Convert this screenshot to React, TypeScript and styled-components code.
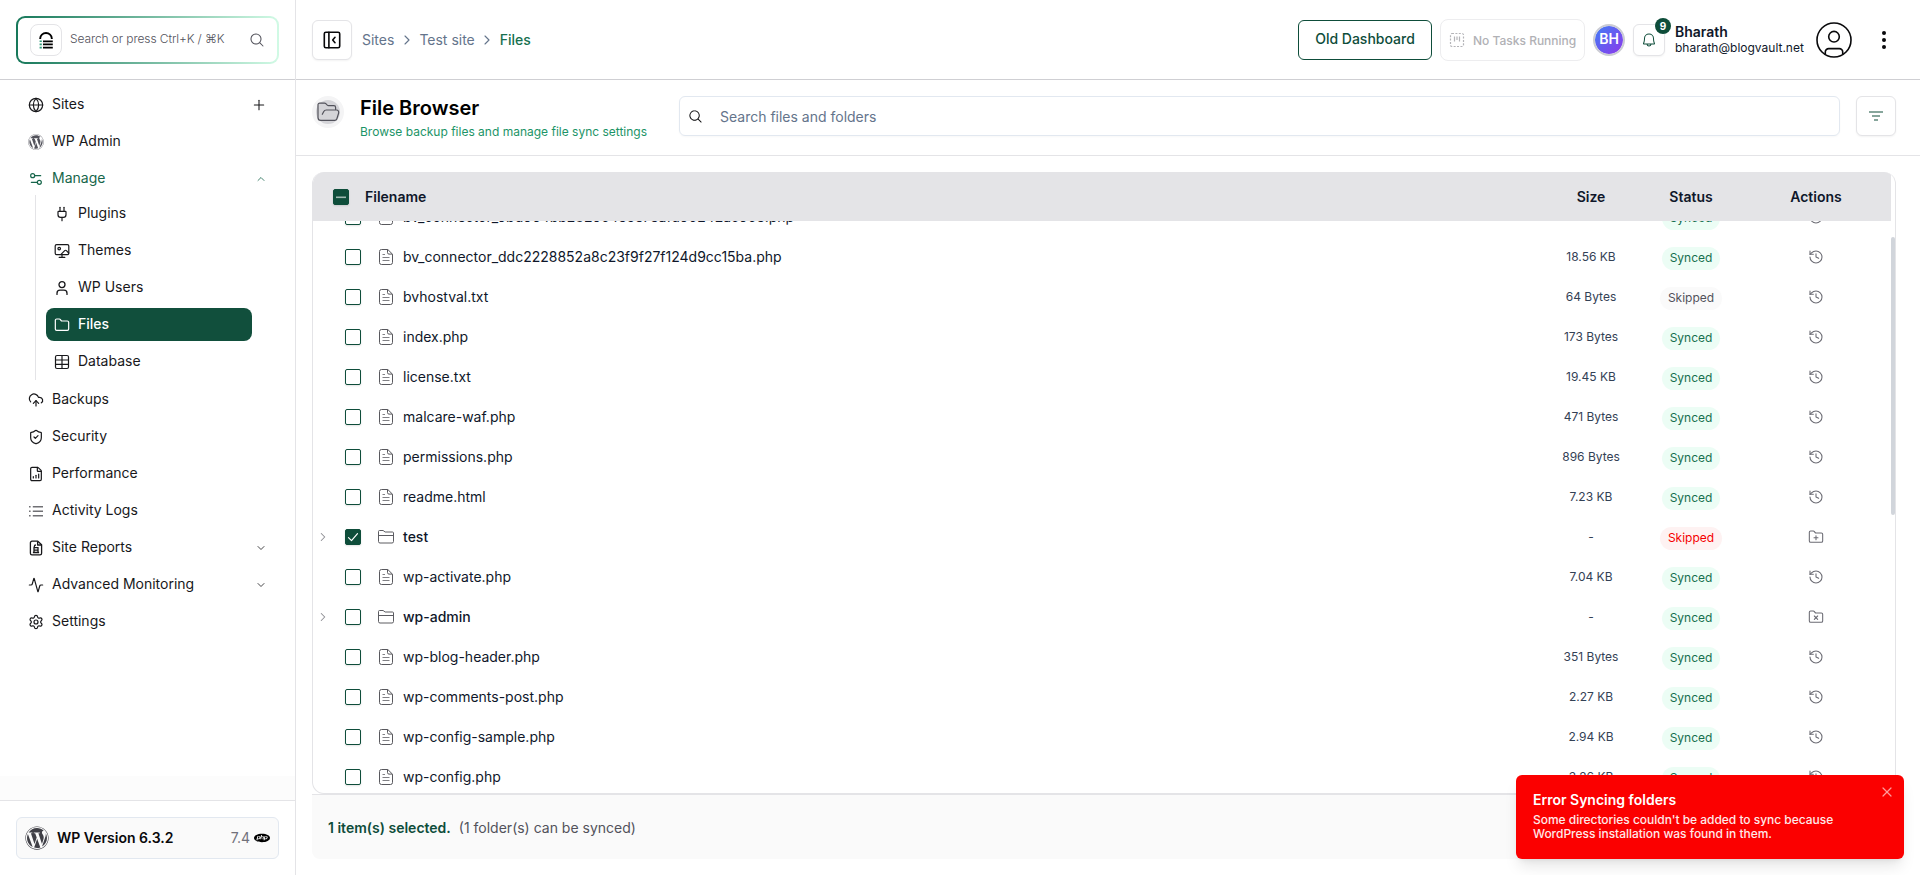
import React from "react";
import styled, { createGlobalStyle, css } from "styled-components";
import {
  Activity,
  ChevronDown,
  ChevronRight,
  ChevronUp,
  CloudUpload,
  FileChartColumnIncreasing,
  Folder,
  FolderPlus,
  FolderX,
  Globe,
  History,
  Plug,
  Plus,
  Settings,
  Settings2,
  ShieldCheck,
  Table as TableIcon,
  UserRound,
  X,
} from "lucide-react";
import { FaWordpress } from "react-icons/fa";
import { SiPhp } from "react-icons/si";
import { PiBell, PiMagnifyingGlass } from "react-icons/pi";

const GlobalStyle = createGlobalStyle`
  *, *::before, *::after { box-sizing: border-box; }
  body {
    margin: 0;
    background: #fff;
    color: #0f172a;
    font-family: Inter, "Liberation Sans", sans-serif;
    font-size: 14px;
    line-height: 20px;
    overflow: hidden;
  }
  svg { display: block; flex: none; }
  button { font: inherit; background: none; border: 0; padding: 0; margin: 0; }
`;

const green = "#0e4d3a";
const line = "#e4e4e7";

/* ---------- shell ---------- */

const Shell = styled.div`
  display: flex;
  width: 100vw;
  height: 875px;
`;

const Sidebar = styled.aside`
  display: flex;
  flex-direction: column;
  width: 296px;
  flex: none;
  border-right: 1px solid ${line};
`;

const Main = styled.main`
  display: flex;
  flex-direction: column;
  flex: 1;
  min-width: 0;
`;

/* ---------- sidebar ---------- */

const SidebarTop = styled.div`
  height: 80px;
  padding: 16px 16px 15px;
  border-bottom: 1px solid #cfcfd3;
`;

const QuickSearch = styled.div`
  display: flex;
  align-items: center;
  width: 263px;
  height: 48px;
  padding: 0 12px 0 12px;
  border: 2px solid transparent;
  border-radius: 9px;
  background: linear-gradient(#fff, #fff) padding-box,
    linear-gradient(90deg, #17785a, #d1fae5) border-box;
`;

const LogoTile = styled.div`
  display: flex;
  align-items: center;
  justify-content: center;
  width: 32px;
  height: 32px;
  border: 1px solid ${line};
  border-radius: 8px;
`;

const QuickSearchText = styled.span`
  flex: 1;
  margin: -2px 0 0 8px;
  font-size: 12px;
  font-weight: 300;
  letter-spacing: -0.1px;
  color: #52525b;
  white-space: nowrap;
`;

const Nav = styled.nav`
  display: flex;
  flex-direction: column;
  flex: 1;
  padding: 6px 28px 0 28px;
`;

const NavItem = styled.a<{ $open?: boolean }>`
  display: flex;
  align-items: center;
  height: 37px;
  gap: 8px;
  color: ${(p) => (p.$open ? "#17664b" : "#18181b")};

  span {
    flex: 1;
    margin-top: -1px;
  }
`;

const SubNav = styled.div`
  display: flex;
  flex-direction: column;
  gap: 4px;
  margin: -2px 0 1px 7px;
  padding: 2px 0 2px 10px;
  border-left: 1px solid ${line};
`;

const SubItem = styled.a<{ $active?: boolean }>`
  display: flex;
  align-items: center;
  gap: 8px;
  width: 206px;
  height: 33px;
  padding-left: 8px;
  border-radius: 8px;
  color: #18181b;
  ${(p) =>
    p.$active &&
    css`
      background: #114f3c;
      color: #fff;
      font-weight: 500;
    `}

  span {
    margin-top: -1px;
  }
`;

const NavFade = styled.div`
  height: 24px;
  background: #fcfcfc;
`;

const SidebarBottom = styled.div`
  height: 75px;
  padding: 16px;
  border-top: 1px solid ${line};
`;

const VersionCard = styled.div`
  display: flex;
  align-items: center;
  width: 263px;
  height: 42px;
  padding: 0 8px 0 8px;
  border: 1px solid #e2e8f0;
  border-radius: 6px;
  background: #fafafa;
`;

const VersionName = styled.strong`
  flex: 1;
  margin-left: 8px;
  font-weight: 600;
  color: #09090b;
`;

const PhpVersion = styled.span`
  display: flex;
  align-items: center;
  gap: 4px;
  color: #71717a;

  svg {
    color: #000;
  }
`;

/* ---------- top bar ---------- */

const TopBar = styled.header`
  display: flex;
  align-items: center;
  height: 80px;
  padding: 0 24px 0 16px;
  border-bottom: 1px solid #cfcfd3;
`;

const IconButton = styled.button<{ $size: number; $radius?: number }>`
  position: relative;
  display: flex;
  align-items: center;
  justify-content: center;
  flex: none;
  width: ${(p) => p.$size}px;
  height: ${(p) => p.$size}px;
  border: 1px solid ${line};
  border-radius: ${(p) => p.$radius ?? 6}px;
  background: #fff;
  box-shadow: 0 1px 2px rgba(0, 0, 0, 0.05);
  color: #09090b;
`;

const Crumbs = styled.div`
  display: flex;
  align-items: center;
  flex: 1;
  gap: 4.5px;
  margin-left: 10px;
  color: #64748b;
`;

const Crumb = styled.span<{ $current?: boolean }>`
  ${(p) => p.$current && "color: #17704f;"}
  font-weight: ${(p) => (p.$current ? 500 : 400)};
`;

const OutlineButton = styled.button`
  width: 134px;
  height: 40px;
  padding-bottom: 2px;
  border: 1px solid ${green};
  border-radius: 6px;
  color: ${green};
  font-weight: 500;
`;

const TaskStatus = styled.div`
  display: flex;
  align-items: center;
  gap: 8px;
  width: 145px;
  height: 42px;
  margin-left: 8px;
  padding-left: 8px;
  border: 1px solid #ededef;
  border-radius: 8px;
  color: #b1b1b5;
  font-size: 12px;
  font-weight: 500;

  span {
    padding-top: 3px;
    white-space: nowrap;
  }
`;

const Avatar = styled.div`
  display: flex;
  align-items: center;
  justify-content: center;
  width: 32px;
  height: 32px;
  margin: 0 8px;
  padding-bottom: 2px;
  border: 2px solid #cbccd4;
  border-radius: 50%;
  background: linear-gradient(135deg, #3b82f6, #9333ea) border-box;
  background-clip: padding-box;
  color: #fff;
  font-weight: 600;
`;

const CountBadge = styled.span`
  position: absolute;
  top: -7px;
  right: -7px;
  width: 16px;
  height: 16px;
  border-radius: 50%;
  background: ${green};
  color: #fff;
  font-size: 10px;
  font-weight: 700;
  line-height: 16px;
  text-align: center;
`;

const Account = styled.div`
  display: flex;
  flex-direction: column;
  width: 141px;
  margin-left: 10px;
  line-height: 16px;
  white-space: nowrap;
  font-size: 12px;

  strong {
    font-size: 14px;
    font-weight: 600;
  }
`;

const Kebab = styled.button`
  margin: 0 10px 0 30px;
`;

/* ---------- page header ---------- */

const PageHeader = styled.section`
  display: flex;
  align-items: flex-start;
  height: 76px;
  padding: 16px 24px 0 16px;
  border-bottom: 1px solid ${line};
`;

const FolderBadge = styled.div`
  display: flex;
  align-items: center;
  justify-content: center;
  width: 32px;
  height: 32px;
  border: 4px solid #f4f4f5;
  border-radius: 50%;
  background: #d4d4d8;
`;

const TitleBlock = styled.div`
  width: 335px;
  padding-left: 16px;
`;

const Title = styled.h1`
  margin: -2px 0 0;
  color: #000;
  font-size: 20px;
  font-weight: 600;
  line-height: 28px;
`;

const Subtitle = styled.p`
  margin: 2px 0 0;
  color: #1c9467;
  font-size: 12px;
  line-height: 16px;
  white-space: nowrap;
`;

const SearchField = styled.div`
  display: flex;
  align-items: center;
  flex: 1;
  gap: 17px;
  height: 40px;
  margin-right: 16px;
  padding-left: 8px;
  border: 1px solid #e2e8f0;
  border-radius: 6px;
  box-shadow: 0 1px 2px rgba(0, 0, 0, 0.03);
  color: #64748b;

  span {
    padding-top: 2px;
  }
`;

/* ---------- file table ---------- */

const columns = "1fr 100px 100px 150px";

const TableCard = styled.section`
  height: 622px;
  margin: 16px 24px 0 16px;
  display: flex;
  border: 1px solid ${line};
  border-top: 0;
  border-radius: 12px;
  overflow: hidden;
`;

const TableBody = styled.div`
  flex: 1;
  display: flex;
  flex-direction: column;
`;

const HeadRow = styled.div`
  display: grid;
  grid-template-columns: ${columns};
  align-items: center;
  flex: none;
  height: 49px;
  background: #e4e4e7;
  font-weight: 600;
`;

const HeadName = styled.div`
  display: flex;
  align-items: center;
  gap: 16px;
  padding-left: 20px;
`;

const HeadCell = styled.div`
  text-align: center;
`;

const Rows = styled.div`
  flex: 1;
  overflow: hidden;
`;

const RowList = styled.div`
  margin-top: -24px;
`;

const Row = styled.div`
  display: grid;
  grid-template-columns: ${columns};
  align-items: center;
  height: 40px;
`;

const NameCell = styled.div<{ $folder?: boolean }>`
  display: flex;
  align-items: center;
  font-weight: ${(p) => (p.$folder ? 500 : 400)};
`;

const Expander = styled.div`
  width: 32px;
  padding-left: 3px;
  color: #8d8d93;
`;

const Checkbox = styled.div<{ $filled?: boolean }>`
  display: flex;
  align-items: center;
  justify-content: center;
  flex: none;
  width: 16px;
  height: 16px;
  border: 1px solid ${green};
  border-radius: 2px;
  background: ${(p) => (p.$filled ? green : "#fff")};
  box-shadow: 0 1px 2px rgba(0, 0, 0, 0.12);
`;

const TypeIcon = styled.div`
  width: 16px;
  margin: 0 9px 0 17px;
`;

const SizeCell = styled.div`
  color: #334155;
  font-size: 12px;
  text-align: center;
`;

type Tone = "green" | "gray" | "red";

const tones: Record<Tone, string> = {
  green: "background: #ecfdf5; color: #17704f;",
  gray: "background: #fafafa; color: #52525b;",
  red: "background: #fef2f2; color: #f50000;",
};

const Status = styled.span<{ $tone: Tone }>`
  justify-self: center;
  height: 23px;
  margin-top: 3px;
  padding: 0 8px;
  border-radius: 12px;
  font-size: 12px;
  line-height: 21px;
  ${(p) => tones[p.$tone]}
`;

const ActionCell = styled.div`
  display: flex;
  justify-content: center;
  color: #6b6b73;
`;

const ScrollTrack = styled.div`
  width: 4px;
  padding-top: 65px;
`;

const ScrollThumb = styled.div`
  height: 278px;
  border-radius: 2px;
  background: #d1d5db;
`;

const SelectionBar = styled.footer`
  display: flex;
  align-items: center;
  gap: 8px;
  height: 65px;
  margin: 0 24px 0 16px;
  padding: 2px 16px 0;
  border-top: 1px solid ${line};
  border-radius: 0 0 8px 8px;
  background: #fafafa;
  color: #52525b;

  strong {
    color: ${green};
    font-weight: 600;
  }
`;

/* ---------- toast ---------- */

const Toast = styled.div`
  position: absolute;
  right: 16px;
  top: 775px;
  width: 388px;
  height: 84px;
  padding: 15px 17px;
  border-radius: 6px;
  background: #fb0000;
  box-shadow: 0 10px 15px -3px rgba(0, 0, 0, 0.1), 0 4px 6px -4px rgba(0, 0, 0, 0.1);
  color: #fff;

  h2 {
    margin: 0;
    font-size: 14px;
    font-weight: 600;
    line-height: 20px;
  }

  p {
    width: 310px;
    margin: 3px 0 0;
    color: #ffe9e9;
    font-size: 12px;
    font-weight: 500;
    letter-spacing: -0.03px;
    line-height: 14px;
  }
`;

const ToastClose = styled.button`
  position: absolute;
  top: 9px;
  right: 9px;
  color: #ff9c9c;
`;

/* ---------- drawings ---------- */

const BrandMark = () => (
  <svg width="14" height="17" viewBox="0 0 14 17" fill="none">
    <path d="M1.2 7V6.4a5.8 5.4 0 0 1 11.6 0V7" stroke="#000" strokeWidth="1.9" />
    <path d="M4 9.3h9.8M4 12.4h9.8M4 15.6h9.8" stroke="#000" strokeWidth="1.8" />
    <path d="M.6 9.3h2.2M.6 12.4h2.2M.6 15.6h2.2" stroke="#2f9c7a" strokeWidth="1.6" />
  </svg>
);

const PanelIcon = () => (
  <svg width="18" height="18" viewBox="0 0 18 18" fill="none" stroke="#09090b" strokeWidth="1.6" strokeLinecap="round" strokeLinejoin="round">
    <rect x="1.3" y="1.2" width="15.4" height="15.6" rx="1.6" />
    <path d="M5.9 1.2v15.6M12 6.3 9.7 9l2.3 2.7" />
  </svg>
);

const ThemesIcon = () => (
  <svg width="16" height="16" viewBox="0 0 16 16" fill="none" stroke="currentColor" strokeWidth="1.2" strokeLinecap="round" strokeLinejoin="round">
    <rect x="1.2" y="1.6" width="13.6" height="10" rx="1.4" />
    <circle cx="5.2" cy="5.6" r="1.3" />
    <path d="m7 11.4 3.7-3.8a1.2 1.2 0 0 1 1.7 0l2.3 2.4M8 11.6v2.8M5.2 14.4h5.6" />
  </svg>
);

const PersonIcon = () => (
  <svg width="16" height="16" viewBox="0 0 16 16" fill="none" stroke="currentColor" strokeWidth="1.3" strokeLinecap="round" strokeLinejoin="round">
    <circle cx="8" cy="4.6" r="3" />
    <path d="M3 14.4v-1.200a3 3 0 0 1 3-3h4a3 3 0 0 1 3 3v1.200" />
  </svg>
);

const GridIcon = () => (
  <svg width="16" height="16" viewBox="0 0 16 16" fill="none" stroke="currentColor" strokeWidth="1.2">
    <rect x="1.500" y="1.500" width="13" height="13" rx="1.500" />
    <path d="M8 1.500v13M1.500 6h13M1.500 10.300h13" />
  </svg>
);

const ListIcon = () => (
  <svg width="16" height="16" viewBox="0 0 16 16" fill="none" stroke="#707074" strokeWidth="1.4">
    <path d="M4.8 3.7H15M4.8 8.2H15M4.8 12.7H15M1 3.7h1.6M1 8.2h1.6M1 12.7h1.6" />
  </svg>
);

const ReportIcon = () => (
  <svg width="16" height="16" viewBox="0 0 16 16" fill="none" stroke="currentColor" strokeWidth="1.3" strokeLinejoin="round">
    <path d="M9.8 1.2H4A1.6 1.6 0 0 0 2.4 2.8v10.4A1.6 1.6 0 0 0 4 14.8h8a1.6 1.6 0 0 0 1.6-1.6V4.8z" />
    <path d="M9.6 1.4v3.6h3.8" />
    <path d="M6.3 7.6V6.4c0-.8.6-1.4 1.6-1.4M5.4 7.7h5.2M6 7.7v4.8h4V7.7M6 10.1h4M4.9 12.5h6.2" />
  </svg>
);

const TasksIcon = () => (
  <svg width="16" height="16" viewBox="0 0 16 16" fill="none" stroke="#b4b4b8">
    <rect x="1.5" y="1.5" width="13" height="13" rx="1.5" strokeWidth="1.2" strokeDasharray="2 1.4" />
    <path d="M5.5 4.5v5M8 4.5v3.6M10.5 4.5v5" strokeWidth="1.2" />
  </svg>
);

const UserIcon = () => (
  <svg width="36" height="36" viewBox="0 0 36 36" fill="none" stroke="#09090b" strokeWidth="1.6">
    <circle cx="18" cy="18" r="17" />
    <circle cx="18" cy="14.7" r="5.3" />
    <path d="M9.3 32.5V30a3.4 3.4 0 0 1 3.4-3.4h10.6a3.4 3.4 0 0 1 3.4 3.4v2.5" />
  </svg>
);

const KebabIcon = () => (
  <svg width="4" height="18" viewBox="0 0 4 18" fill="#09090b">
    <circle cx="2" cy="2" r="2" />
    <circle cx="2" cy="9" r="2" />
    <circle cx="2" cy="16" r="2" />
  </svg>
);

const OpenFolderIcon = () => (
  <svg width="23" height="20" viewBox="0 0 23 20" fill="none" stroke="#52525b" strokeWidth="1.2" strokeLinecap="round" strokeLinejoin="round">
    <path d="M18.6 7V5.4c0-1-.7-1.7-1.7-1.7h-5.4c-.5 0-.9-.2-1.2-.5L8.8 1.6c-.3-.3-.7-.5-1.2-.5H2.7C1.7 1.1 1 1.8 1 2.8v12.700c0 1.600 1 2.900 2.700 2.900h14.100c1 0 1.700-.5 2-1.400l1.800-5.700c.5-1.600-.5-3.300-2-3.300H9.300c-1.200 0-2 .4-2.500 1.400L5.300 12.300" />
  </svg>
);

const FilterIcon = () => (
  <svg width="14" height="10" viewBox="0 0 14 10" fill="#87a69c">
    <rect width="14" height="2" />
    <rect x="3" y="4" width="8" height="2" />
    <rect x="5" y="8" width="4" height="2" />
  </svg>
);

const DocIcon = () => (
  <svg width="16" height="16" viewBox="0 0 16 16" fill="none" stroke="#58585d" strokeLinejoin="round">
    <path d="M9.8.5H3.5a2 2 0 0 0-2 2v11a2 2 0 0 0 2 2h9a2 2 0 0 0 2-2V5.2z" />
    <path d="M9.5.6v3A1.5 1.5 0 0 0 11 5.1h3.3" />
    <path d="M4.500 5.500h2.500M4.500 8.500h7M4.500 11.500h7" stroke="#808085" />
  </svg>
);

const DirIcon = () => (
  <svg width="16" height="16" viewBox="0 0 16 16" fill="none" stroke="#5c5c61" strokeLinejoin="round">
    <path d="M.5 12.5v-10a1 1 0 0 1 1-1h3.600l2 1.500h7.400a1 1 0 0 1 1 1v8.500a1.500 1.500 0 0 1-1.500 1.500H2a1.500 1.500 0 0 1-1.500-1.500zM.5 6.500h15" />
  </svg>
);

const TickIcon = () => (
  <svg width="12" height="12" viewBox="0 0 12 12" fill="none" stroke="#fff" strokeWidth="1.2" strokeLinecap="round" strokeLinejoin="round">
    <path d="m1.500 6.600 3 3 6-7" />
  </svg>
);

const DashIcon = () => (
  <svg width="10" height="10" viewBox="0 0 10 10">
    <rect y="4.500" width="10" height="1.600" fill="#9fb8b0" />
  </svg>
);

/* ---------- data ---------- */

type FileRow = {
  name: string;
  size: string;
  status: string;
  tone: Tone;
  folder?: boolean;
  checked?: boolean;
};

const file = (name: string, size: string): FileRow => ({ name, size, status: "Synced", tone: "green" });

const files: FileRow[] = [
  file("bv_connector_9bd964bb2829c4e5e7eafd90242ac90e.php", "18.56 KB"),
  file("bv_connector_ddc2228852a8c23f9f27f124d9cc15ba.php", "18.56 KB"),
  { name: "bvhostval.txt", size: "64 Bytes", status: "Skipped", tone: "gray" },
  file("index.php", "173 Bytes"),
  file("license.txt", "19.45 KB"),
  file("malcare-waf.php", "471 Bytes"),
  file("permissions.php", "896 Bytes"),
  file("readme.html", "7.23 KB"),
  { name: "test", size: "-", status: "Skipped", tone: "red", folder: true, checked: true },
  file("wp-activate.php", "7.04 KB"),
  { name: "wp-admin", size: "-", status: "Synced", tone: "green", folder: true },
  file("wp-blog-header.php", "351 Bytes"),
  file("wp-comments-post.php", "2.27 KB"),
  file("wp-config-sample.php", "2.94 KB"),
  file("wp-config.php", "3.26 KB"),
];

const rowAction = (f: FileRow) => {
  if (!f.folder) return <History size={16} strokeWidth={1.6} />;
  return f.tone === "red" ? <FolderPlus size={16} strokeWidth={1.6} /> : <FolderX size={16} strokeWidth={1.6} />;
};

const nav = { size: 16, strokeWidth: 1.8 };

export default function App() {
  return (
    <>
      <GlobalStyle />
      <Shell>
        <Sidebar>
          <SidebarTop>
            <QuickSearch>
              <LogoTile><BrandMark /></LogoTile>
              <QuickSearchText>Search or press Ctrl+K / ⌘K</QuickSearchText>
              <PiMagnifyingGlass size={16} color="#52525b" />
            </QuickSearch>
          </SidebarTop>
          <Nav>
            <NavItem><Globe {...nav} /><span>Sites</span><Plus size={16} strokeWidth={1.6} /></NavItem>
            <NavItem><FaWordpress size={16} color="#52525b" /><span>WP Admin</span></NavItem>
            <NavItem $open><Settings2 {...nav} /><span>Manage</span><ChevronUp size={12} strokeWidth={1.6} /></NavItem>
            <SubNav>
              <SubItem><Plug {...nav} /><span>Plugins</span></SubItem>
              <SubItem><ThemesIcon /><span>Themes</span></SubItem>
              <SubItem><PersonIcon /><span>WP Users</span></SubItem>
              <SubItem $active><Folder {...nav} /><span>Files</span></SubItem>
              <SubItem><GridIcon /><span>Database</span></SubItem>
            </SubNav>
            <NavItem><CloudUpload {...nav} /><span>Backups</span></NavItem>
            <NavItem><ShieldCheck {...nav} /><span>Security</span></NavItem>
            <NavItem><FileChartColumnIncreasing {...nav} /><span>Performance</span></NavItem>
            <NavItem><ListIcon /><span>Activity Logs</span></NavItem>
            <NavItem><ReportIcon /><span>Site Reports</span><ChevronDown size={12} strokeWidth={1.6} /></NavItem>
            <NavItem><Activity {...nav} /><span>Advanced Monitoring</span><ChevronDown size={12} strokeWidth={1.6} /></NavItem>
            <NavItem><Settings {...nav} /><span>Settings</span></NavItem>
          </Nav>
          <NavFade />
          <SidebarBottom>
            <VersionCard>
              <FaWordpress size={24} color="#3f3f46" />
              <VersionName>WP Version 6.3.2</VersionName>
              <PhpVersion>7.4 <SiPhp size={16} /></PhpVersion>
            </VersionCard>
          </SidebarBottom>
        </Sidebar>

        <Main>
          <TopBar>
            <IconButton $size={40}><PanelIcon /></IconButton>
            <Crumbs>
              <Crumb>Sites</Crumb>
              <ChevronRight size={16} strokeWidth={1.7} />
              <Crumb>Test site</Crumb>
              <ChevronRight size={16} strokeWidth={1.7} />
              <Crumb $current>Files</Crumb>
            </Crumbs>
            <OutlineButton>Old Dashboard</OutlineButton>
            <TaskStatus><TasksIcon /><span>No Tasks Running</span></TaskStatus>
            <Avatar>BH</Avatar>
            <IconButton $size={32}>
              <PiBell size={16} color={green} />
              <CountBadge>9</CountBadge>
            </IconButton>
            <Account>
              <strong>Bharath</strong>
              <span>bharath@blogvault.net</span>
            </Account>
            <UserIcon />
            <Kebab><KebabIcon /></Kebab>
          </TopBar>

          <PageHeader>
            <FolderBadge><OpenFolderIcon /></FolderBadge>
            <TitleBlock>
              <Title>File Browser</Title>
              <Subtitle>Browse backup files and manage file sync settings</Subtitle>
            </TitleBlock>
            <SearchField>
              <PiMagnifyingGlass size={15} color="#09090b" />
              <span>Search files and folders</span>
            </SearchField>
            <IconButton $size={40}><FilterIcon /></IconButton>
          </PageHeader>

          <TableCard>
            <TableBody>
              <HeadRow>
                <HeadName><Checkbox $filled><DashIcon /></Checkbox>Filename</HeadName>
                <HeadCell>Size</HeadCell>
                <HeadCell>Status</HeadCell>
                <HeadCell>Actions</HeadCell>
              </HeadRow>
              <Rows>
                <RowList>
                  {files.map((f) => (
                    <Row key={f.name}>
                      <NameCell $folder={f.folder}>
                        <Expander>{f.folder && <ChevronRight size={14} strokeWidth={1.8} />}</Expander>
                        <Checkbox $filled={f.checked}>{f.checked && <TickIcon />}</Checkbox>
                        <TypeIcon>{f.folder ? <DirIcon /> : <DocIcon />}</TypeIcon>
                        {f.name}
                      </NameCell>
                      <SizeCell>{f.size}</SizeCell>
                      <Status $tone={f.tone}>{f.status}</Status>
                      <ActionCell>{rowAction(f)}</ActionCell>
                    </Row>
                  ))}
                </RowList>
              </Rows>
            </TableBody>
            <ScrollTrack><ScrollThumb /></ScrollTrack>
          </TableCard>

          <SelectionBar>
            <strong>1 item(s) selected.</strong>
            <span>(1 folder(s) can be synced)</span>
          </SelectionBar>
        </Main>
      </Shell>

      <Toast role="alert">
        <h2>Error Syncing folders</h2>
        <p>Some directories couldn't be added to sync because WordPress installation was found in them.</p>
        <ToastClose aria-label="Close"><X size={16} strokeWidth={1.8} /></ToastClose>
      </Toast>
    </>
  );
}
